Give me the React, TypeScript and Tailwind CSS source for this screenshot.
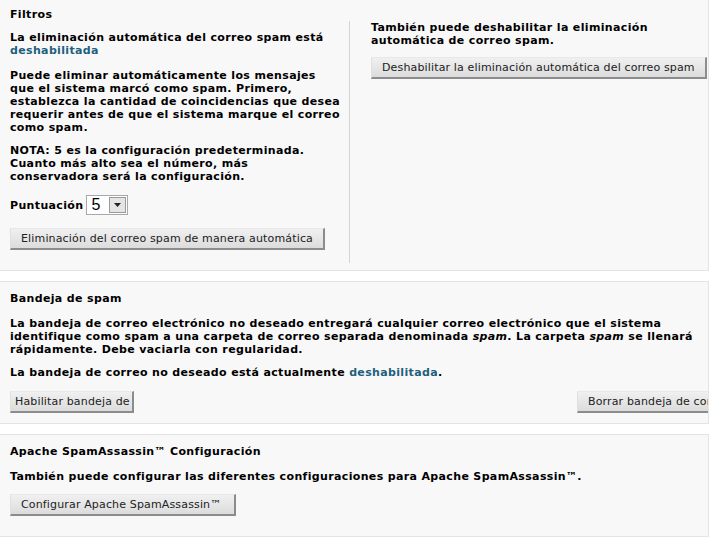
import React from "react";

const btnBase =
  "h-[22px] bg-gradient-to-b from-[#f0f0f0] to-[#dcdcdc] border-t border-l border-t-[#e8e8e8] border-l-[#e0e0e0] border-r-2 border-b-2 border-r-[#8c8c8c] border-b-[#8c8c8c] text-[#222] font-normal text-[11px] tracking-[0.15px] leading-[18px] whitespace-nowrap text-left";
const btn = btnBase + " px-[10px]";

const Link = ({ children }: { children: React.ReactNode }) => (
  <span className="text-[#1f5f7e]">{children}</span>
);

export default function App() {
  return (
    <div className="w-[716px] h-[550px] bg-white font-['DejaVu_Sans',sans-serif] text-[11px] font-bold leading-[13px] tracking-[0.35px] text-black">
      {/* Panel 1 */}
      <div className="w-[709px] bg-[#f8f8f8] border-r border-b border-[#e4e4e4] pt-[8px] pb-[7px] pl-[10px] overflow-hidden">
        <div>Filtros</div>
        <div className="flex">
          <div className="w-[340px] shrink-0 border-r border-[#d4d4d4] pt-[10px] pb-[13px] whitespace-nowrap">
            <div>
              La eliminación automática del correo spam está
              <br />
              <Link>deshabilitada</Link>
            </div>
            <div className="mt-[12px]">
              Puede eliminar automáticamente los mensajes
              <br />
              que el sistema marcó como spam. Primero,
              <br />
              establezca la cantidad de coincidencias que desea
              <br />
              requerir antes de que el sistema marque el correo
              <br />
              como spam.
            </div>
            <div className="mt-[10px]">
              NOTA: 5 es la configuración predeterminada.
              <br />
              Cuanto más alto sea el número, más
              <br />
              conservadora será la configuración.
            </div>
            <div className="mt-[12px] flex items-center h-[20px]">
              <span>Puntuación</span>
              <div className="ml-[3px] w-[42px] h-[20px] bg-white border border-[#a8a8a8] flex items-center justify-between">
                <span className="font-normal tracking-normal font-['Liberation_Sans',sans-serif] text-[16px] leading-[18px] pl-[4px]">
                  5
                </span>
                <span className="w-[17px] h-[16px] mr-[1px] bg-[#e4e4e4] border border-[#9a9a9a] flex items-center justify-center">
                  <svg width="7" height="4" viewBox="0 0 7 4">
                    <path d="M0 0h7L3.5 4z" fill="#222" />
                  </svg>
                </span>
              </div>
            </div>
            <div className="mt-[13px]">
              <button className={btn}>Eliminación del correo spam de manera automática</button>
            </div>
          </div>
          <div className="pl-[21px] whitespace-nowrap">
            <div>
              También puede deshabilitar la eliminación
              <br />
              automática de correo spam.
            </div>
            <div className="mt-[10px]">
              <button className={btn}>Deshabilitar la eliminación automática del correo spam</button>
            </div>
          </div>
        </div>
      </div>

      {/* Panel 2 */}
      <div className="mt-[10px] w-[709px] bg-[#f8f8f8] border-t border-r border-b border-[#e4e4e4] pt-[10px] pb-[10px] pl-[10px] overflow-hidden">
        <div>Bandeja de spam</div>
        <div className="mt-[12px] whitespace-nowrap">
          La bandeja de correo electrónico no deseado entregará cualquier correo electrónico que el sistema
          <br />
          identifique como spam a una carpeta de correo separada denominada <i>spam</i>. La carpeta{" "}
          <i>spam</i> se llenará
          <br />
          rápidamente. Debe vaciarla con regularidad.
        </div>
        <div className="mt-[10px]">
          La bandeja de correo no deseado está actualmente <Link>deshabilitada</Link>.
        </div>
        <div className="mt-[12px] flex">
          <button className={btnBase + " pl-[4px] w-[124px] overflow-hidden shrink-0"}>Habilitar bandeja de correo no deseado</button>
          <button className={btn + " ml-[443px] shrink-0"}>Borrar bandeja de correo no deseado</button>
        </div>
      </div>

      {/* Panel 3 */}
      <div className="mt-[10px] w-[709px] bg-[#f8f8f8] border-t border-r border-b border-[#e4e4e4] pt-[10px] pb-[20px] pl-[10px] overflow-hidden">
        <div>Apache SpamAssassin™ Configuración</div>
        <div className="mt-[12px]">
          También puede configurar las diferentes configuraciones para Apache SpamAssassin™.
        </div>
        <div className="mt-[11px]">
          <button className={btn + " pr-[13px]"}>Configurar Apache SpamAssassin™</button>
        </div>
      </div>
    </div>
  );
}
